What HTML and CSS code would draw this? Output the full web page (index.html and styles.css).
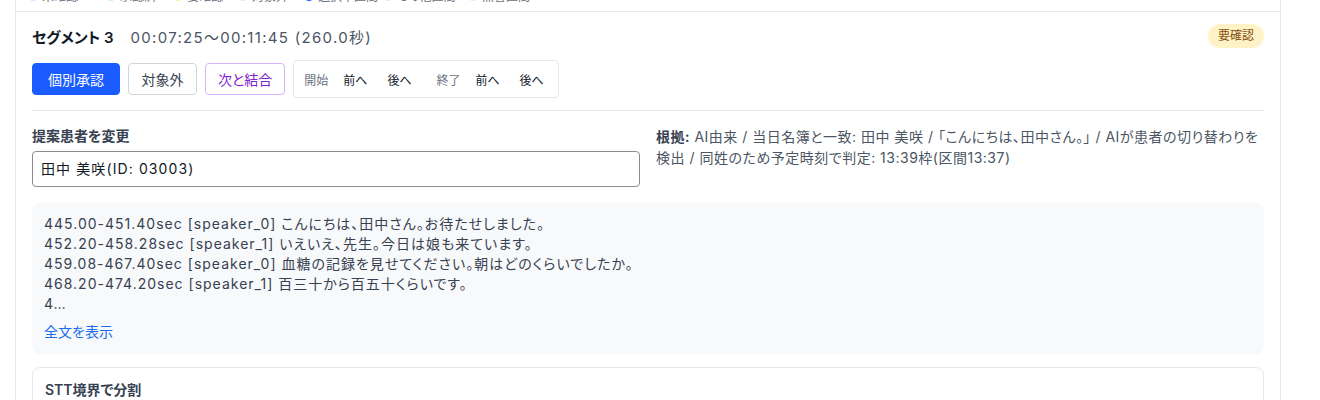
FILE: index.html
```html
<!DOCTYPE html>
<html lang="ja">
<head>
<meta charset="utf-8">
<link rel="stylesheet" href="styles.css">
</head>
<body>
<div class="panel">
  <div class="legend">
    <span class="lg"><i class="dot d-purple"></i>未確認</span>
    <span class="lg"><i class="dot d-green"></i>承認済</span>
    <span class="lg"><i class="dot d-yellow"></i>要確認</span>
    <span class="lg"><i class="dot d-gray"></i>対象外</span>
    <span class="lg"><i class="dot d-blue"></i>選択中区間</span>
    <span class="lg"><i class="dot d-gray"></i>その他区間</span>
    <span class="lg"><i class="dot d-gray"></i>無音区間</span>
  </div>
  <section class="segment">
    <div class="seg-head">
      <div class="head-row">
        <div class="title"><span class="seg-name">セグメント 3</span><span class="seg-time">00:07:25〜00:11:45 (260.0秒)</span></div>
        <span class="badge">要確認</span>
      </div>
      <div class="actions">
        <button class="btn btn-primary">個別承認</button>
        <button class="btn btn-outline">対象外</button>
        <button class="btn btn-merge">次と結合</button>
        <div class="adjust">
          <span class="adj-label">開始</span>
          <button class="adj-btn">前へ</button>
          <button class="adj-btn">後へ</button>
          <span class="adj-label adj-end">終了</span>
          <button class="adj-btn">前へ</button>
          <button class="adj-btn">後へ</button>
        </div>
      </div>
    </div>
    <div class="patient-grid">
      <div class="field">
        <label class="field-label">提案患者を変更</label>
        <div class="input">田中 美咲(ID: 03003)</div>
      </div>
      <p class="reason"><b>根拠:</b> AI由来 / 当日名簿と一致: 田中 美咲 / 「こんにちは、田中さん。」 / AIが患者の切り替わりを検出 / 同姓のため予定時刻で判定: 13:39枠(区間13:37)</p>
    </div>
    <div class="transcript">
      <div class="lines">
        <div>445.00-451.40sec [speaker_0] こんにちは、田中さん。お待たせしました。</div>
        <div>452.20-458.28sec [speaker_1] いえいえ、先生。今日は娘も来ています。</div>
        <div>459.08-467.40sec [speaker_0] 血糖の記録を見せてください。朝はどのくらいでしたか。</div>
        <div>468.20-474.20sec [speaker_1] 百三十から百五十くらいです。</div>
        <div>4…</div>
      </div>
      <a class="more">全文を表示</a>
    </div>
    <div class="split">
      <div class="split-title">STT境界で分割</div>
    </div>
  </section>
</div>
</body>
</html>
```
FILE: styles.css
```css
* { box-sizing: border-box; }
html, body { margin: 0; padding: 0; background: #fff; }
body {
  font-family: Inter, "Noto Sans CJK JP", sans-serif;
  font-feature-settings: "palt";
  color: #1f2937;
  height: 400px;
  overflow: hidden;
}
.panel {
  margin-left: 15px;
  width: 1266px;
  border-left: 1px solid #e5e7eb;
  border-right: 1px solid #e5e7eb;
  min-height: 420px;
}
.legend {
  display: grid;
  grid-template-columns: 78px 67px 65px 66px 79px 85px auto;
  align-items: start;
  padding: 0 13px;
  height: 21px;
  margin-top: -10px;
  font-size: 12px;
  line-height: 14px;
  color: #6b7280;
  white-space: nowrap;
}
.lg { display: flex; align-items: center; gap: 5px; }
.dot { display: inline-block; width: 8px; height: 8px; border-radius: 50%; }
.d-purple { background: #e9d5ff; }
.d-green { background: #bbf7d0; }
.d-yellow { background: #fef08a; }
.d-gray { background: #e5e7eb; }
.d-blue { background: #1a5cff; }
.segment {
  border-top: 1px solid #e5e7eb;
  padding: 12px 16px 0;
}
.seg-head {
  border-bottom: 1px solid #e5e7eb;
  padding-bottom: 12px;
}
.head-row {
  display: flex;
  justify-content: space-between;
  align-items: center;
  height: 24px;
}
.title { display: flex; align-items: baseline; gap: 17px; }
.seg-name { font-size: 15px; font-weight: 600; color: #111827; }
.seg-time { font-size: 15px; color: #4b5563; letter-spacing: 1.3px; }
.badge {
  background: #fef3c7;
  color: #854d0e;
  font-size: 12px;
  line-height: 24px;
  padding: 0 10px;
  border-radius: 12px;
}
.actions {
  display: flex;
  align-items: center;
  gap: 8px;
  margin-top: 12px;
}
.btn {
  font-family: inherit;
  font-feature-settings: "palt";
  font-size: 14px;
  height: 32px;
  padding: 0 12px;
  border-radius: 4px;
  background: #fff;
  cursor: pointer;
}
.btn-primary { background: #1a5cff; color: #fff; border: 1px solid #1a5cff; padding: 0 15px; }
.btn-outline { border: 1px solid #d1d5db; color: #374151; padding: 0 12.5px; }
.btn-merge { border: 1px solid #d8b4fe; color: #7e22ce; padding: 0 12px; }
.adjust {
  display: flex;
  align-items: center;
  gap: 4px;
  height: 38px;
  padding: 0 7px 0 10px;
  border: 1px solid #e5e7eb;
  border-radius: 4px;
  font-size: 12px;
}
.adj-label { color: #6b7280; margin-right: 3px; }
.adj-end { margin-left: 13px; }
.adj-btn {
  font-family: inherit;
  font-size: 12px;
  color: #111827;
  background: transparent;
  border: 0;
  padding: 0 8px;
  height: 28px;
}
.patient-grid {
  display: grid;
  grid-template-columns: 1fr 1fr;
  gap: 16px;
  padding-top: 15px;
}
.field-label {
  display: block;
  font-size: 14px;
  font-weight: 600;
  line-height: 20px;
  color: #374151;
}
.input {
  margin-top: 5px;
  height: 36px;
  border: 1px solid #8c8c8c;
  border-radius: 4px;
  padding: 0 8px;
  font-size: 14px;
  line-height: 34px;
  letter-spacing: 1.1px;
  color: #111827;
}
.reason {
  margin: 0;
  font-size: 14px;
  line-height: 21px;
  letter-spacing: 0.5px;
  color: #4b5563;
}
.reason b { font-weight: 600; color: #374151; }
.transcript {
  margin-top: 16px;
  background: #f8f9fb;
  border-radius: 8px;
  padding: 11px 12px 12px;
}
.lines { font-size: 14px; line-height: 20px; color: #374151; letter-spacing: 1px; }
.more {
  display: block;
  margin-top: 8px;
  font-size: 14px;
  line-height: 20px;
  color: #1a6cf0;
}
.split {
  margin-top: 13px;
  border: 1px solid #e5e7eb;
  border-radius: 8px;
  padding: 12px 12px;
}
.split-title { font-size: 14px; font-weight: 600; line-height: 20px; color: #374151; }
```
